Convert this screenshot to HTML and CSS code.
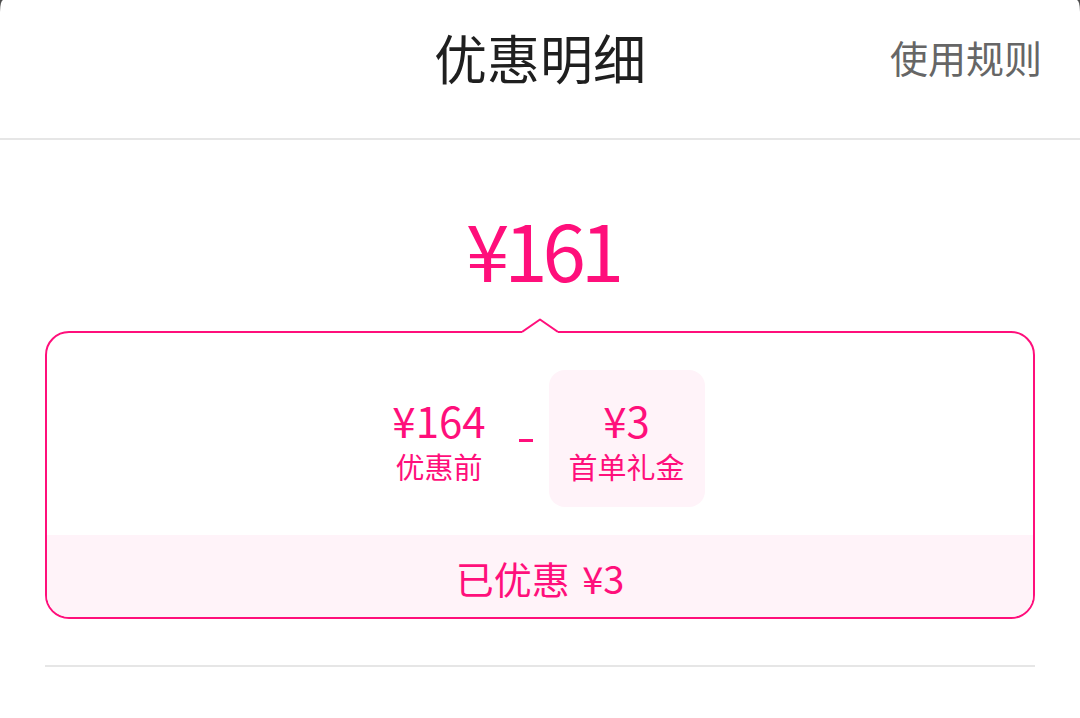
FILE: index.html
```html
<!DOCTYPE html>
<html lang="zh-CN">
<head>
<meta charset="utf-8">
<title>优惠明细</title>
<link rel="stylesheet" href="styles.css">
</head>
<body>
<div class="sheet">
  <header class="header">
    <span></span>
    <h1 class="title">优惠明细</h1>
    <a class="rules">使用规则</a>
  </header>
  <section class="content">
    <div class="total">¥161</div>
    <div class="card">
      <svg class="notch" width="36" height="16" viewBox="0 0 36 16">
        <path d="M0 14 L18 1.5 L36 14 V16 H0 Z" fill="#fff"/>
        <polyline points="0,14 18,1.5 36,14" fill="none" stroke="#ff0f7b" stroke-width="2" stroke-linejoin="round"/>
      </svg>
      <div class="calc">
        <div class="item">
          <div class="amount">¥164</div>
          <div class="label">优惠前</div>
        </div>
        <span class="minus"></span>
        <div class="item item-box">
          <div class="amount">¥3</div>
          <div class="label">首单礼金</div>
        </div>
      </div>
      <div class="saved">已优惠 ¥3</div>
    </div>
    <div class="divider"></div>
  </section>
</div>
</body>
</html>
```
FILE: styles.css
```css
html {
  background: #4d4d4d;
}
body {
  margin: 0;
  font-family: "Noto Sans CJK SC", "Noto Sans", sans-serif;
}
.sheet {
  background: #fff;
  height: 718px;
  border-top-left-radius: 3px 12px;
  border-top-right-radius: 3px 12px;
}
.header {
  height: 114px;
  padding-bottom: 24px;
  border-bottom: 2px solid #e6e6e6;
  display: grid;
  grid-template-columns: 1fr auto 1fr;
  align-items: center;
}
.title {
  margin: 0;
  font-size: 53px;
  line-height: 1;
  font-weight: 400;
  color: #1f1f1f;
}
.rules {
  justify-self: end;
  margin-right: 38px;
  font-size: 38px;
  line-height: 1;
  color: #666;
}
.content {
  padding: 0 45px;
}
.total {
  margin-top: 69px;
  text-align: center;
  font-size: 78px;
  line-height: 1;
  letter-spacing: -5px;
  text-indent: 5px;
  color: #ff0f7b;
}
.card {
  position: relative;
  margin-top: 44px;
  border: 2px solid #ff0f7b;
  border-radius: 24px;
}
.notch {
  position: absolute;
  left: 475px;
  top: -15px;
  display: block;
}
.calc {
  display: flex;
  justify-content: center;
  align-items: center;
  padding: 37px 0 0 17px;
  margin-bottom: 28px;
}
.item {
  display: flex;
  flex-direction: column;
  align-items: center;
  padding: 29px 0 26px;
  color: #ff0f7b;
}
.item-box {
  padding: 29px 20px 26px;
  background: #fff3f9;
  border-radius: 16px;
}
.amount {
  font-size: 42px;
  line-height: 1;
}
.label {
  margin-top: 11px;
  font-size: 29px;
  line-height: 1;
}
.minus {
  width: 14px;
  height: 3px;
  background: #ff0f7b;
  margin: 4px 16px 0 33px;
}
.saved {
  height: 82px;
  display: flex;
  align-items: center;
  justify-content: center;
  background: #fff3f9;
  border-radius: 0 0 22px 22px;
  font-size: 38px;
  color: #ff0f7b;
  line-height: 1;
  padding-top: 4px;
  box-sizing: border-box;
  word-spacing: 4px;
}
.divider {
  margin-top: 46px;
  height: 2px;
  background: #e6e6e6;
}
```
